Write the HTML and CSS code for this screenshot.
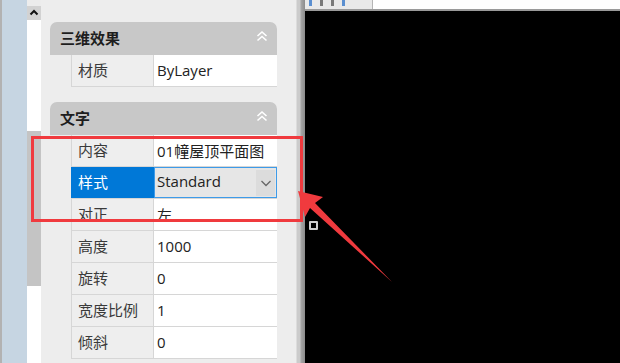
FILE: index.html
```html
<!DOCTYPE html>
<html lang="zh-CN">

<head>
    <meta charset="UTF-8">
    <meta name="viewport" content="width=device-width, initial-scale=1.0">
    <title>特性</title>
    <link rel="stylesheet" href="styles.css">
</head>

<body>
    <div class="app">
        <div class="dockEdge"></div>
        <div class="scrollBar">
            <div class="scrollUp">
                <svg width="14" height="14" viewBox="0 0 14 14"><polyline points="3.5,8.5 7,5 10.5,8.5" fill="none" stroke="#111" stroke-width="2"/></svg>
            </div>
            <div class="scrollTrack"></div>
            <div class="scrollThumb"></div>
            <div class="scrollTrack"></div>
        </div>
        <div class="panel">
            <div class="group">
                <div class="groupHead">
                    <span>三维效果</span>
                    <svg class="collapse" width="12" height="12" viewBox="0 0 12 12"><polyline points="1.5,6 6,2 10.5,6" fill="none" stroke="#fff" stroke-width="1.6"/><polyline points="1.5,10.5 6,6.5 10.5,10.5" fill="none" stroke="#fff" stroke-width="1.6"/></svg>
                </div>
                <div class="prop">
                    <div class="propName">材质</div>
                    <div class="propValue">ByLayer</div>
                </div>
            </div>
            <div class="group">
                <div class="groupHead">
                    <span>文字</span>
                    <svg class="collapse" width="12" height="12" viewBox="0 0 12 12"><polyline points="1.5,6 6,2 10.5,6" fill="none" stroke="#fff" stroke-width="1.6"/><polyline points="1.5,10.5 6,6.5 10.5,10.5" fill="none" stroke="#fff" stroke-width="1.6"/></svg>
                </div>
                <div class="prop">
                    <div class="propName">内容</div>
                    <div class="propValue">01幢屋顶平面图</div>
                </div>
                <div class="prop active">
                    <div class="propName">样式</div>
                    <div class="propValue">
                        <span>Standard</span>
                        <div class="dropBtn">
                            <svg width="12" height="12" viewBox="0 0 12 12"><polyline points="1.5,4 6,8.5 10.5,4" fill="none" stroke="#666" stroke-width="1.3"/></svg>
                        </div>
                    </div>
                </div>
                <div class="prop">
                    <div class="propName">对正</div>
                    <div class="propValue">左</div>
                </div>
                <div class="prop">
                    <div class="propName">高度</div>
                    <div class="propValue">1000</div>
                </div>
                <div class="prop">
                    <div class="propName">旋转</div>
                    <div class="propValue">0</div>
                </div>
                <div class="prop">
                    <div class="propName">宽度比例</div>
                    <div class="propValue">1</div>
                </div>
                <div class="prop">
                    <div class="propName">倾斜</div>
                    <div class="propValue">0</div>
                </div>
            </div>
        </div>
        <div class="panelEdge"></div>
        <div class="viewport">
            <div class="toolbar">
                <div class="toolIcons">
                    <span class="tick blue"></span>
                    <span class="tick"></span>
                    <span class="tick"></span>
                    <span class="tick blue"></span>
                </div>
                <div class="toolField"></div>
            </div>
            <div class="canvas"></div>
        </div>
    </div>

    <div class="calloutBox"></div>
    <svg class="calloutArrow" width="620" height="363" viewBox="0 0 620 363">
        <polygon points="298,191 323,197 315,203 392,282 310,208 305,217" fill="#f03a3e"/>
    </svg>
    <div class="grip"></div>
</body>

</html>
```

FILE: styles.css
```css
* {
    box-sizing: border-box;
    padding: 0;
    margin: 0px;
}

body {
    width: 620px;
    height: 363px;
    overflow: hidden;
    font-family: "Open Sans", "Noto Sans CJK SC", sans-serif;
    font-size: 15px;
    color: #222;
    background: #000;
}

.app {
    display: flex;
    height: 363px;
}

.dockEdge {
    width: 27px;
    background-color: #c6d5e2;
    border-left: 2px solid #b2b2b2;
}

.scrollBar {
    width: 14px;
    display: flex;
    flex-direction: column;
    background-color: #ececec;
    padding-top: 6px;
}

.scrollUp {
    height: 14px;
    background-color: #d2d2d2;
    display: flex;
    align-items: center;
    justify-content: center;
}

.scrollTrack {
    background-color: #fff;
    flex: 1;
}

.scrollTrack:first-of-type {
    flex: none;
}

.scrollUp + .scrollTrack {
    flex: none;
    height: 111px;
}

.scrollThumb {
    height: 155px;
    background-color: #c4c4c4;
}

.panel {
    width: 255px;
    background-color: #ededed;
    padding: 22px 0 0 9px;
}

.group {
    width: 227px;
    margin-bottom: 15px;
}

.groupHead {
    height: 33px;
    background-color: #c8c8c8;
    border-radius: 7px 7px 0 0;
    display: flex;
    align-items: center;
    justify-content: space-between;
    padding: 0 9px 2px 10px;
    font-weight: 700;
    color: #1e1e1e;
}

.collapse {
    margin-top: -4px;
}

.prop {
    display: flex;
    height: 32px;
    margin-left: 21px;
    border-bottom: 1px solid #d6d6d6;
}

.propName {
    width: 83px;
    background-color: #eeeeee;
    border-left: 1px solid #d6d6d6;
    border-right: 1px solid #d6d6d6;
    padding: 4px 0 0 6px;
    color: #3a3a3a;
}

.propValue {
    flex: 1;
    background-color: #fff;
    padding: 5px 0 0 3px;
}

.prop.active .propName {
    background-color: #0078d7;
    color: #fff;
    border-color: #0078d7;
}

.prop.active .propValue {
    display: flex;
    justify-content: space-between;
    background-color: #e6e6e6;
    border: 1px solid #3d9be9;
    padding: 3px 0 0 2px;
}

.dropBtn {
    width: 19px;
    height: 26px;
    margin-top: -1px;
    margin-right: 1px;
    background-color: #dcdcdc;
    display: flex;
    align-items: center;
    justify-content: center;
}

.panelEdge {
    width: 9px;
    background: linear-gradient(to right, #ededed 0px, #cbcbcb 1px, #cbcbcb 4px, #a6a6a6 5px, #8c8c8c 9px);
}

.viewport {
    flex: 1;
    display: flex;
    flex-direction: column;
}

.toolbar {
    height: 11px;
    display: flex;
    background-color: #e9e9e9;
    border-bottom: 2px solid #9a9a9a;
}

.toolIcons {
    width: 67px;
    display: flex;
    gap: 8px;
    padding: 0 0 0 4px;
}

.tick {
    width: 3px;
    height: 6px;
    background-color: #7a7a7a;
}

.tick.blue {
    background-color: #5b8fd0;
}

.toolField {
    flex: 1;
    background-color: #fff;
    border-left: 1px solid #b5b5b5;
}

.canvas {
    flex: 1;
    background-color: #000;
}

/* callout overlay drawn on top of the screenshot */
.calloutBox {
    position: absolute;
    left: 31px;
    top: 136px;
    width: 272px;
    height: 86px;
    border: 3px solid #f03a3e;
}

.calloutArrow {
    position: absolute;
    left: 0;
    top: 0;
}

.grip {
    position: absolute;
    left: 309px;
    top: 221px;
    width: 9px;
    height: 9px;
    border: 2px solid #cfcfcf;
    border-radius: 1px;
}
```
